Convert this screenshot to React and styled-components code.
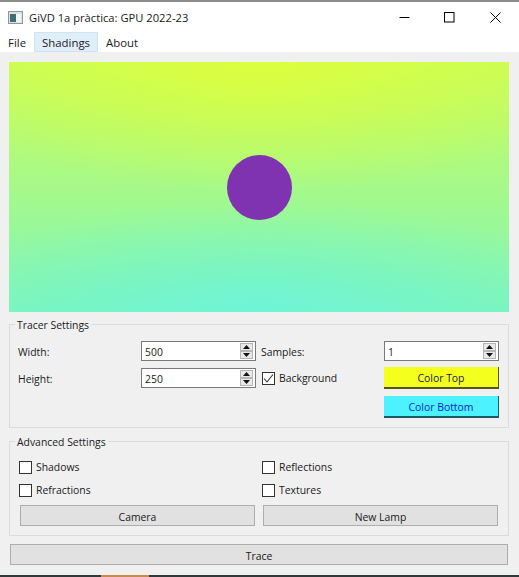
import React from 'react';
import styled, { createGlobalStyle } from 'styled-components';

const GlobalStyle = createGlobalStyle`
  html, body {
    margin: 0;
    padding: 0;
    background: #f0f0f0;
  }
  * {
    box-sizing: border-box;
  }
`;

const SpinBox = ({ value }) => (
  <SpinFrame>
    <SpinValue>{value}</SpinValue>
    <SpinArrows>
      <SpinArrow>
        <svg width="7" height="4" viewBox="0 0 7 4"><path d="M3.5 0L7 4H0z" fill="#111" /></svg>
      </SpinArrow>
      <SpinArrow>
        <svg width="7" height="4" viewBox="0 0 7 4"><path d="M0 0h7L3.5 4z" fill="#111" /></svg>
      </SpinArrow>
    </SpinArrows>
  </SpinFrame>
);

const CheckField = ({ label, checked, shift = -1 }) => (
  <CheckRow $shift={shift}>
    <CheckBox>
      {checked && (
        <svg width="11" height="11" viewBox="0 0 11 11">
          <path d="M1 5.5L4 9l6-7.5" fill="none" stroke="#333" strokeWidth="1.1" />
        </svg>
      )}
    </CheckBox>
    {label}
  </CheckRow>
);

const App = () => {
  return (
    <>
      <GlobalStyle />
      <Screen>
        <TopEdge />
        <Window>
          <TitleBar>
            <AppIcon>
              <svg width="15" height="13" viewBox="0 0 15 13">
                <rect x="0.5" y="0.5" width="14" height="12" fill="#dfe3e4" stroke="#8d9698" />
                <rect x="2" y="3" width="6" height="8" fill="#3f6f75" />
                <rect x="8" y="3" width="5" height="8" fill="#f3f5f5" />
              </svg>
            </AppIcon>
            <WindowTitle>GiVD 1a pràctica: GPU 2022-23</WindowTitle>
            <WindowControls>
              <WindowButton>
                <svg width="11" height="11" viewBox="0 0 11 11"><path d="M0.5 5.5h10" stroke="#000" fill="none" /></svg>
              </WindowButton>
              <WindowButton>
                <svg width="11" height="11" viewBox="0 0 11 11"><rect x="0.5" y="0.5" width="9.5" height="9.5" stroke="#000" fill="none" /></svg>
              </WindowButton>
              <WindowButton>
                <svg width="11" height="11" viewBox="0 0 11 11"><path d="M0.5 0.5l10 10M10.5 0.5l-10 10" stroke="#000" fill="none" /></svg>
              </WindowButton>
            </WindowControls>
          </TitleBar>
          <MenuBar>
            <MenuItem>File</MenuItem>
            <MenuItem $active>Shadings</MenuItem>
            <MenuItem>About</MenuItem>
          </MenuBar>
          <Content>
            <Viewport>
              <Sphere />
            </Viewport>
            <Group $gap={12}>
              <GroupTitle>Tracer Settings</GroupTitle>
              <TracerGrid>
                <FieldLabel>Width:</FieldLabel>
                <SpinBox value="500" />
                <FieldLabel>Samples:</FieldLabel>
                <SpinBox value="1" />
                <FieldLabel>Height:</FieldLabel>
                <SpinBox value="250" />
                <CheckField label="Background" checked shift={1} />
                <ColorButton $bg="#f5ff1e" $fg="#14145a" $edge="#56561c">Color Top</ColorButton>
                <ColorButton $bg="#4cf2ff" $fg="#0a1ee0" $edge="#1c5a68" $column={4}>Color Bottom</ColorButton>
              </TracerGrid>
            </Group>
            <Group $gap={13}>
              <GroupTitle>Advanced Settings</GroupTitle>
              <AdvancedGrid>
                <CheckField label="Shadows" />
                <CheckField label="Reflections" />
                <CheckField label="Refractions" />
                <CheckField label="Textures" />
                <GridButton>Camera</GridButton>
                <GridButton>New Lamp</GridButton>
              </AdvancedGrid>
            </Group>
            <TraceButton>Trace</TraceButton>
          </Content>
        </Window>
        <TaskStrip>
          <TaskHighlight />
        </TaskStrip>
      </Screen>
    </>
  );
};

const Screen = styled.div`
  width: 519px;
  height: 577px;
  overflow: hidden;
  display: flex;
  flex-direction: column;
  font-family: "Open Sans", "Noto Sans", sans-serif;
  font-size: 11.2px;
  color: #1a1a1a;
`;

const TopEdge = styled.div`
  height: 2px;
  flex: none;
  background: #8c8c8c;
`;

const Window = styled.div`
  flex: 1;
  display: flex;
  flex-direction: column;
`;

const TitleBar = styled.div`
  height: 30px;
  flex: none;
  background: #fff;
  display: flex;
  align-items: center;
  padding-left: 8px;
`;

const AppIcon = styled.div`
  width: 21px;
  display: flex;
`;

const WindowTitle = styled.div`
  flex: 1;
`;

const WindowControls = styled.div`
  display: flex;
  margin-right: 1px;
`;

const WindowButton = styled.div`
  width: 45.5px;
  height: 30px;
  display: flex;
  align-items: center;
  justify-content: center;
`;

const MenuBar = styled.div`
  height: 20px;
  flex: none;
  background: #fff;
  display: flex;
  font-size: 11.4px;
`;

const MenuItem = styled.div`
  height: 20px;
  padding: 0 8px;
  display: flex;
  align-items: center;
  background: ${(p) => (p.$active ? '#e0eefa' : 'transparent')};
  outline: ${(p) => (p.$active ? '1px solid #cde4f7' : 'none')};
  outline-offset: -1px;
`;

const Content = styled.div`
  flex: 1;
  padding: 10px 9px 0;
  display: flex;
  flex-direction: column;
  font-size: 10.4px;
`;

const Viewport = styled.div`
  width: 500px;
  height: 250px;
  flex: none;
  display: flex;
  align-items: center;
  justify-content: center;
  background:
    radial-gradient(ellipse 360px 130px at 50% 0, rgba(226, 255, 50, 0.75), rgba(226, 255, 50, 0)),
    radial-gradient(ellipse 360px 110px at 50% 100%, rgba(105, 243, 222, 0.8), rgba(105, 243, 222, 0)),
    linear-gradient(#c8fd5c, #a6f98a 50%, #80f6b8);
`;

const Sphere = styled.div`
  width: 65px;
  height: 65px;
  border-radius: 50%;
  background: #7f33b0;
`;

const Group = styled.div`
  position: relative;
  width: 500px;
  border: 1px solid #dcdcdc;
  margin-top: ${(p) => p.$gap}px;
`;

const GroupTitle = styled.div`
  position: absolute;
  top: -8px;
  left: 5px;
  padding: 0 2px;
  background: #f0f0f0;
  line-height: 16px;
`;

const TracerGrid = styled.div`
  display: grid;
  grid-template-columns: 118px 115px 118px 115px;
  grid-template-rows: 20px 22px 23px;
  column-gap: 5px;
  row-gap: 6px;
  padding: 16px 0 9px 8px;
  align-items: center;
`;

const FieldLabel = styled.div`
  display: flex;
  align-items: center;
  padding-top: 2px;
`;

const SpinFrame = styled.div`
  height: 20px;
  background: #fff;
  border: 1px solid #7a7a7a;
  display: flex;
  align-items: center;
  justify-content: space-between;
  padding: 1px 2px;
`;

const SpinValue = styled.span`
  padding: 2px 0 0 1px;
`;

const SpinArrows = styled.div`
  display: flex;
  flex-direction: column;
  width: 13px;
  height: 16px;
`;

const SpinArrow = styled.div`
  flex: 1;
  background: #e9e9e9;
  border: 1px solid #b5b5b5;
  display: flex;
  align-items: center;
  justify-content: center;
`;

const ColorButton = styled.button`
  grid-column: ${(p) => p.$column || 'auto'};
  align-self: end;
  width: 115px;
  height: 22px;
  padding: 2px 0 0;
  font: inherit;
  color: ${(p) => p.$fg};
  background: ${(p) => p.$bg};
  border: none;
  border-right: 1px solid ${(p) => p.$edge};
  border-bottom: 2px solid ${(p) => p.$edge};
`;

const AdvancedGrid = styled.div`
  display: grid;
  grid-template-columns: 235px 235px;
  grid-template-rows: 20px 20px 23px;
  column-gap: 8px;
  row-gap: 3px;
  padding: 15px 0 9px 10px;
`;

const CheckRow = styled.label`
  display: flex;
  align-items: center;
  gap: 4px;
  margin-left: ${(p) => p.$shift}px;
`;

const CheckBox = styled.span`
  width: 13px;
  height: 13px;
  flex: none;
  background: #fff;
  border: 1px solid #333;
  display: flex;
  align-items: center;
  justify-content: center;
`;

const PushButton = styled.button`
  height: 21px;
  padding: 2px 0 0;
  font: inherit;
  color: #1a1a1a;
  background: #e1e1e1;
  border: 1px solid #adadad;
`;

const GridButton = styled(PushButton)`
  align-self: end;
`;

const TraceButton = styled(PushButton)`
  width: 498px;
  margin: 8px 0 0 1px;
`;

const TaskStrip = styled.div`
  height: 2px;
  flex: none;
  background: #2f3a3c;
  padding-left: 101px;
`;

const TaskHighlight = styled.div`
  width: 48px;
  height: 2px;
  background: #c98a4e;
`;

export default App;
